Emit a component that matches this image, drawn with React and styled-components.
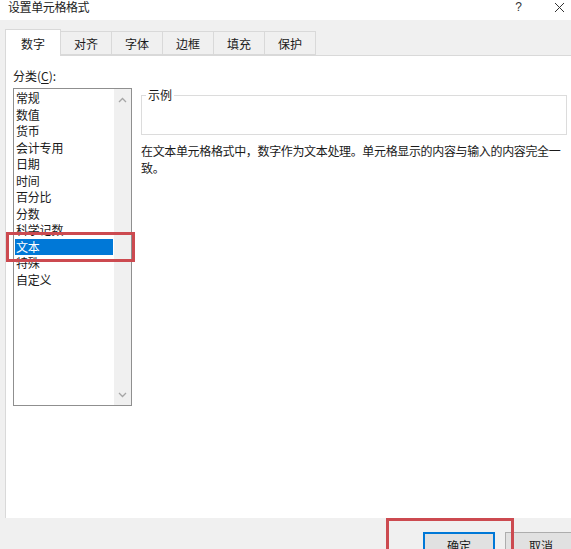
import styled, { createGlobalStyle } from "styled-components";

const GlobalStyle = createGlobalStyle`
  html, body {
    margin: 0;
    padding: 0;
    background: #ffffff;
  }
  body {
    font-family: "Noto Sans CJK SC", "Noto Sans", sans-serif;
    font-size: 12px;
    color: #1a1a1a;
  }
`;

const categories = [
  "常规",
  "数值",
  "货币",
  "会计专用",
  "日期",
  "时间",
  "百分比",
  "分数",
  "科学记数",
  "文本",
  "特殊",
  "自定义",
];

const tabs = ["数字", "对齐", "字体", "边框", "填充", "保护"];

const ChevronUp = () => (
  <svg width="9" height="6" viewBox="0 0 9 6">
    <path d="M1 5 L4.5 1.5 L8 5" fill="none" stroke="#a6a6a6" strokeWidth="1.3" />
  </svg>
);

const ChevronDown = () => (
  <svg width="9" height="6" viewBox="0 0 9 6">
    <path d="M1 1 L4.5 4.5 L8 1" fill="none" stroke="#a6a6a6" strokeWidth="1.3" />
  </svg>
);

const CloseIcon = () => (
  <svg width="11" height="11" viewBox="0 0 11 11">
    <path d="M1 1 L10 10 M10 1 L1 10" stroke="#333" strokeWidth="1" />
  </svg>
);

const App = () => {
  return (
    <Dialog>
      <GlobalStyle />
      {/* title bar */}
      <TitleBar>
        <Title>设置单元格格式</Title>
        <TitleButtons>
          <Help>?</Help>
          <CloseIcon />
        </TitleButtons>
      </TitleBar>

      {/* tabs */}
      <TabRow>
        {tabs.map((t, i) => (
          <Tab key={t} $active={i === 0}>
            {t}
          </Tab>
        ))}
      </TabRow>

      {/* page */}
      <Panel>
        <LeftColumn>
          <Label>
            分类(<u>C</u>):
          </Label>
          <ListBox>
            <Items>
              {categories.map((c) => (
                <Item key={c} $selected={c === "文本"}>
                  {c}
                </Item>
              ))}
            </Items>
            <ScrollBar>
              <ChevronUp />
              <ChevronDown />
            </ScrollBar>
          </ListBox>
        </LeftColumn>

        <RightColumn>
          <SampleBox>
            <Legend>示例</Legend>
            <SampleValue />
          </SampleBox>
          <Description>
            在文本单元格格式中，数字作为文本处理。单元格显示的内容与输入的内容完全一致。
          </Description>
        </RightColumn>
      </Panel>

      {/* buttons */}
      <Footer>
        <Button $default>确定</Button>
        <Button>取消</Button>
      </Footer>

      {/* red annotation marks */}
      <Mark style={{ left: 6, top: 232, width: 129, height: 30 }} />
      <Mark style={{ left: 386, top: 518, width: 128, height: 40 }} />
    </Dialog>
  );
};

const Dialog = styled.div`
  position: relative;
  width: 571px;
  height: 549px;
  overflow: hidden;
  background: #f0f0f0;
  display: flex;
  flex-direction: column;
`;

const TitleBar = styled.div`
  height: 20px;
  flex-shrink: 0;
  background: #ffffff;
  display: flex;
  align-items: flex-start;
  justify-content: space-between;
  padding: 0 6px 0 8px;
`;

const Title = styled.div`
  font-size: 12px;
  line-height: 14px;
  color: #222;
  letter-spacing: -0.4px;
`;

const TitleButtons = styled.div`
  display: flex;
  align-items: center;
  gap: 32px;
  height: 14px;
`;

const Help = styled.span`
  font-family: "Liberation Sans", sans-serif;
  font-size: 12px;
  line-height: 14px;
  color: #333;
`;

const TabRow = styled.div`
  display: flex;
  align-items: flex-end;
  height: 26px;
  margin-top: 9px;
  padding-left: 5px;
  flex-shrink: 0;
`;

const Tab = styled.div`
  position: relative;
  z-index: ${(p) => (p.$active ? 1 : 0)};
  height: ${(p) => (p.$active ? "27px" : "24px")};
  margin-bottom: ${(p) => (p.$active ? "-1px" : "0")};
  margin-left: -1px;
  padding: 0 ${(p) => (p.$active ? "15px" : "13px")};
  box-sizing: border-box;
  display: flex;
  align-items: center;
  justify-content: center;
  background: ${(p) => (p.$active ? "#ffffff" : "#f0f0f0")};
  border: 1px solid #d9d9d9;
  border-bottom: ${(p) => (p.$active ? "none" : "1px solid #d9d9d9")};
  font-size: 12px;
  color: #1a1a1a;

  &:first-child {
    margin-left: 0;
  }
`;

const Panel = styled.div`
  height: 463px;
  flex-shrink: 0;
  margin-left: 5px;
  box-sizing: border-box;
  background: #ffffff;
  border-top: 1px solid #d9d9d9;
  border-left: 1px solid #d9d9d9;
  padding: 12px 0 0 7px;
  display: flex;
  align-items: flex-start;
  gap: 9px;
`;

const LeftColumn = styled.div`
  display: flex;
  flex-direction: column;
  gap: 4px;
`;

const Label = styled.div`
  line-height: 16px;
  font-size: 12px;

  u {
    text-underline-offset: 2px;
  }
`;

const ListBox = styled.div`
  width: 119px;
  height: 318px;
  box-sizing: border-box;
  border: 1px solid #8f8f8f;
  display: flex;
  background: #ffffff;
`;

const Items = styled.div`
  width: 100px;
  padding-top: 1px;
  display: flex;
  flex-direction: column;
`;

const Item = styled.div`
  margin: 0 1px;
  height: 16.5px;
  line-height: 16.5px;
  padding-left: 1px;
  font-size: 12px;
  letter-spacing: -0.2px;
  white-space: nowrap;
  background: ${(p) => (p.$selected ? "#0078d7" : "transparent")};
  color: ${(p) => (p.$selected ? "#ffffff" : "#1a1a1a")};
`;

const ScrollBar = styled.div`
  width: 17px;
  background: #f0f0f0;
  display: flex;
  flex-direction: column;
  justify-content: space-between;
  align-items: center;
  padding: 8px 0 7px;
  box-sizing: border-box;
`;

const RightColumn = styled.div`
  width: 426px;
  margin-top: 21px;
  display: flex;
  flex-direction: column;
  gap: 7px;
`;

const SampleBox = styled.fieldset`
  margin: 0;
  padding: 0;
  border: 1px solid #dcdcdc;
  min-width: 0;
`;

const Legend = styled.legend`
  margin-left: 4px;
  padding: 0 2px;
  font-size: 12px;
  line-height: 12px;
  color: #1a1a1a;
`;

const SampleValue = styled.div`
  height: 33px;
`;

const Description = styled.div`
  font-size: 12px;
  line-height: 17px;
  letter-spacing: -0.35px;
  color: #1a1a1a;
`;

const Footer = styled.div`
  flex: 1;
  display: flex;
  justify-content: flex-end;
  align-items: flex-start;
  gap: 10px;
  padding-top: 14px;
  margin-right: -6px;
`;

const Button = styled.div`
  width: 72px;
  height: 24px;
  box-sizing: border-box;
  padding-top: 2px;
  display: flex;
  align-items: center;
  justify-content: center;
  font-size: 12px;
  color: #1a1a1a;
  background: #e1e1e1;
  border: ${(p) => (p.$default ? "2px solid #0078d7" : "1px solid #adadad")};
`;

const Mark = styled.div`
  position: absolute;
  box-sizing: border-box;
  border: 3px solid #cc4a50;
  pointer-events: none;
  z-index: 5;
`;

export default App;
